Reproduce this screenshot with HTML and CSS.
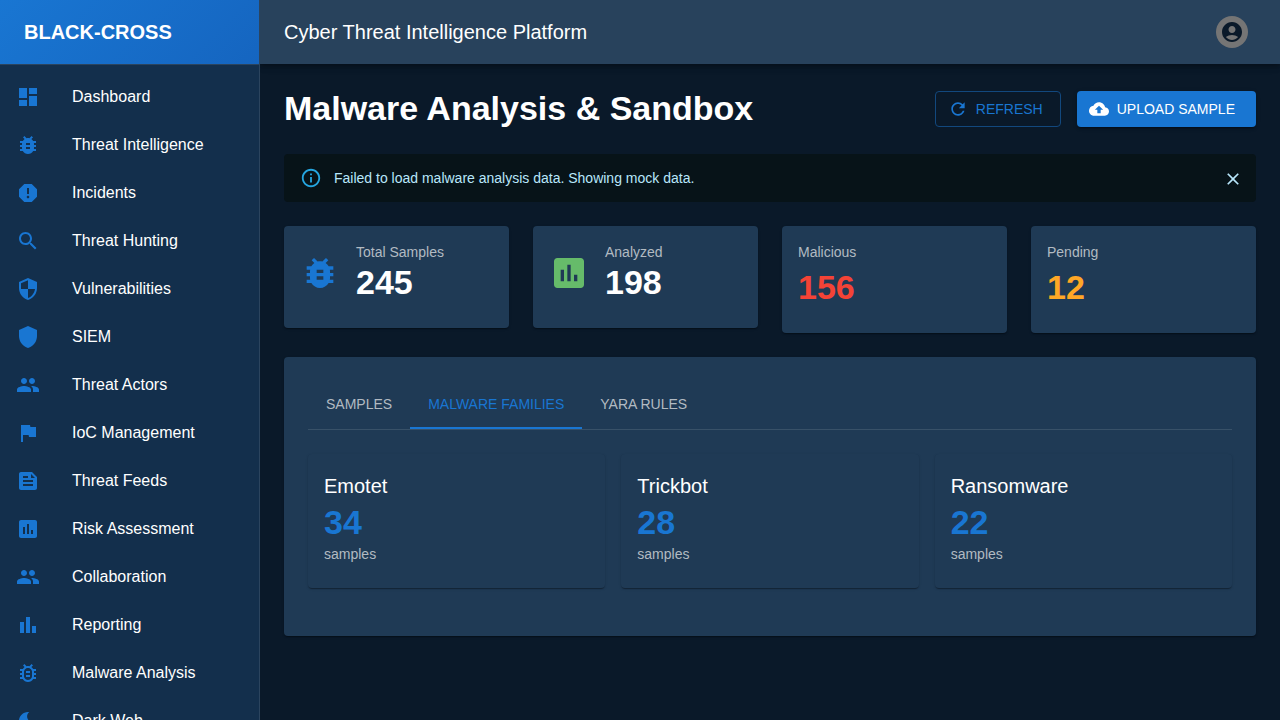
FILE: index.html
```html
<!DOCTYPE html>
<html lang="en">
<head>
<meta charset="utf-8">
<meta name="viewport" content="width=device-width, initial-scale=1">
<title>Malware Analysis - Black-Cross</title>
<link rel="stylesheet" href="styles.css">
</head>
<body>
<svg class="sprite" aria-hidden="true">
  <symbol id="dashboard" viewBox="0 0 24 24"><path d="M3 13h8V3H3v10zm0 8h8v-6H3v6zm10 0h8V11h-8v10zm0-18v6h8V3h-8z"/></symbol>
  <symbol id="bug" viewBox="0 0 24 24"><path d="M20 8h-2.81c-.45-.78-1.07-1.45-1.82-1.96L17 4.41 15.59 3l-2.17 2.17C12.96 5.06 12.49 5 12 5c-.49 0-.96.06-1.41.17L8.41 3 7 4.41l1.62 1.63C7.88 6.55 7.26 7.22 6.81 8H4v2h2.09c-.05.33-.09.66-.09 1v1H4v2h2v1c0 .34.04.67.09 1H4v2h2.81c1.04 1.79 2.97 3 5.19 3s4.15-1.21 5.19-3H20v-2h-2.09c.05-.33.09-.66.09-1v-1h2v-2h-2v-1c0-.34-.04-.67-.09-1H20V8zm-6 8h-4v-2h4v2zm0-4h-4v-2h4v2z"/></symbol>
  <symbol id="bug-outline" viewBox="0 0 24 24"><path d="M20 8h-2.81c-.45-.78-1.07-1.45-1.82-1.96L17 4.41 15.59 3l-2.17 2.17C12.96 5.06 12.49 5 12 5s-.96.06-1.41.17L8.41 3 7 4.41l1.62 1.63C7.88 6.55 7.26 7.22 6.81 8H4v2h2.09c-.05.33-.09.66-.09 1v1H4v2h2v1c0 .34.04.67.09 1H4v2h2.81c1.04 1.79 2.97 3 5.19 3s4.15-1.21 5.19-3H20v-2h-2.09c.05-.33.09-.66.09-1v-1h2v-2h-2v-1c0-.34-.04-.67-.09-1H20V8zm-4 4v3c0 .22-.03.47-.07.7l-.1.65-.37.65c-.72 1.24-2.04 2-3.46 2s-2.74-.77-3.46-2l-.37-.64-.1-.65C8.03 15.48 8 15.23 8 15v-4c0-.23.03-.48.07-.7l.1-.65.37-.65c.3-.52.72-.97 1.21-1.31l.57-.39.74-.18c.31-.08.63-.12.94-.12.32 0 .63.04.95.12l.68.16.61.42c.5.34.91.78 1.21 1.31l.38.65.1.65c.04.22.07.47.07.69v1zm-6 2h4v2h-4zm0-4h4v2h-4z"/></symbol>
  <symbol id="report" viewBox="0 0 24 24"><path d="M15.73 3H8.27L3 8.27v7.46L8.27 21h7.46L21 15.73V8.27L15.73 3zM12 17.3c-.72 0-1.3-.58-1.3-1.3s.58-1.3 1.3-1.3 1.3.58 1.3 1.3-.58 1.3-1.3 1.3zm1-4.3h-2V7h2v6z"/></symbol>
  <symbol id="search" viewBox="0 0 24 24"><path d="M15.5 14h-.79l-.28-.27C15.41 12.59 16 11.11 16 9.5 16 5.91 13.09 3 9.5 3S3 5.91 3 9.5 5.91 16 9.5 16c1.61 0 3.09-.59 4.23-1.57l.27.28v.79l5 4.99L20.49 19l-4.99-5zm-6 0C7.01 14 5 11.99 5 9.5S7.01 5 9.5 5 14 7.01 14 9.5 11.99 14 9.5 14z"/></symbol>
  <symbol id="security" viewBox="0 0 24 24"><path d="M12 1 3 5v6c0 5.55 3.84 10.74 9 12 5.16-1.26 9-6.45 9-12V5l-9-4zm0 10.99h7c-.53 4.12-3.28 7.79-7 8.94V12H5V6.3l7-3.11v8.8z"/></symbol>
  <symbol id="shield" viewBox="0 0 24 24"><path d="M12 1 3 5v6c0 5.55 3.84 10.74 9 12 5.16-1.26 9-6.45 9-12V5l-9-4z"/></symbol>
  <symbol id="people" viewBox="0 0 24 24"><path d="M16 11c1.66 0 2.99-1.34 2.99-3S17.66 5 16 5c-1.66 0-3 1.34-3 3s1.34 3 3 3zm-8 0c1.66 0 2.99-1.34 2.99-3S9.66 5 8 5C6.34 5 5 6.34 5 8s1.34 3 3 3zm0 2c-2.33 0-7 1.17-7 3.5V19h14v-2.5c0-2.33-4.67-3.5-7-3.5zm8 0c-.29 0-.62.02-.97.05 1.16.84 1.97 1.97 1.97 3.45V19h6v-2.5c0-2.33-4.67-3.5-7-3.5z"/></symbol>
  <symbol id="flag" viewBox="0 0 24 24"><path d="M14.4 6 14 4H5v17h2v-7h5.6l.4 2h7V6z"/></symbol>
  <symbol id="feed" viewBox="0 0 24 24"><path d="M16 3H5c-1.1 0-2 .9-2 2v14c0 1.1.9 2 2 2h14c1.1 0 2-.9 2-2V8l-5-5zM7 7h5v2H7V7zm10 10H7v-2h10v2zm0-4H7v-2h10v2zm-2-4V5l4 4h-4z"/></symbol>
  <symbol id="assessment" viewBox="0 0 24 24"><path d="M19 3H5c-1.1 0-2 .9-2 2v14c0 1.1.9 2 2 2h14c1.1 0 2-.9 2-2V5c0-1.1-.9-2-2-2zM9 17H7v-7h2v7zm4 0h-2V7h2v10zm4 0h-2v-4h2v4z"/></symbol>
  <symbol id="bars" viewBox="0 0 24 24"><path d="M4 9h4v11H4zm12 4h4v7h-4zm-6-9h4v16h-4z"/></symbol>
  <symbol id="moon" viewBox="0 0 24 24"><path d="M12 3c-4.97 0-9 4.03-9 9s4.03 9 9 9 9-4.03 9-9c0-.46-.04-.92-.1-1.36-.98 1.37-2.58 2.26-4.4 2.26-2.98 0-5.4-2.42-5.4-5.4 0-1.81.89-3.42 2.26-4.4-.44-.06-.9-.1-1.36-.1z"/></symbol>
  <symbol id="account" viewBox="0 0 24 24"><path d="M12 2C6.48 2 2 6.48 2 12s4.48 10 10 10 10-4.48 10-10S17.52 2 12 2zm0 4c1.93 0 3.5 1.57 3.5 3.5S13.93 13 12 13s-3.5-1.57-3.5-3.5S10.07 6 12 6zm0 14c-2.03 0-4.43-.82-6.14-2.88C7.55 15.8 9.68 15 12 15s4.45.8 6.14 2.12C16.43 19.18 14.03 20 12 20z"/></symbol>
  <symbol id="refresh" viewBox="0 0 24 24"><path d="M17.65 6.35C16.2 4.9 14.21 4 12 4c-4.42 0-7.99 3.58-7.99 8s3.57 8 7.99 8c3.73 0 6.84-2.55 7.73-6h-2.08c-.82 2.33-3.04 4-5.65 4-3.31 0-6-2.69-6-6s2.69-6 6-6c1.66 0 3.14.69 4.22 1.78L13 11h7V4l-2.35 2.35z"/></symbol>
  <symbol id="upload" viewBox="0 0 24 24"><path d="M19.35 10.04C18.67 6.59 15.64 4 12 4 9.11 4 6.6 5.64 5.35 8.04 2.34 8.36 0 10.91 0 14c0 3.31 2.69 6 6 6h13c2.76 0 5-2.24 5-5 0-2.64-2.05-4.78-4.65-4.96zM14 13v4h-4v-4H7l5-5 5 5h-3z"/></symbol>
  <symbol id="info" viewBox="0 0 24 24"><path d="M11 7h2v2h-2zm0 4h2v6h-2zm1-9C6.48 2 2 6.48 2 12s4.48 10 10 10 10-4.48 10-10S17.52 2 12 2zm0 18c-4.41 0-8-3.59-8-8s3.59-8 8-8 8 3.59 8 8-3.59 8-8 8z"/></symbol>
  <symbol id="close" viewBox="0 0 24 24"><path d="M19 6.41 17.59 5 12 10.59 6.41 5 5 6.41 10.59 12 5 17.59 6.41 19 12 13.41 17.59 19 19 17.59 13.41 12z"/></symbol>
</svg>
<div class="layout">
  <aside class="sidebar">
    <div class="brand">BLACK-CROSS</div>
    <nav class="nav" aria-label="Main">
      <a class="nav-link" href="#"><svg class="icon"><use href="#dashboard"/></svg><span>Dashboard</span></a>
      <a class="nav-link" href="#"><svg class="icon"><use href="#bug"/></svg><span>Threat Intelligence</span></a>
      <a class="nav-link" href="#"><svg class="icon"><use href="#report"/></svg><span>Incidents</span></a>
      <a class="nav-link" href="#"><svg class="icon"><use href="#search"/></svg><span>Threat Hunting</span></a>
      <a class="nav-link" href="#"><svg class="icon"><use href="#security"/></svg><span>Vulnerabilities</span></a>
      <a class="nav-link" href="#"><svg class="icon"><use href="#shield"/></svg><span>SIEM</span></a>
      <a class="nav-link" href="#"><svg class="icon"><use href="#people"/></svg><span>Threat Actors</span></a>
      <a class="nav-link" href="#"><svg class="icon"><use href="#flag"/></svg><span>IoC Management</span></a>
      <a class="nav-link" href="#"><svg class="icon"><use href="#feed"/></svg><span>Threat Feeds</span></a>
      <a class="nav-link" href="#"><svg class="icon"><use href="#assessment"/></svg><span>Risk Assessment</span></a>
      <a class="nav-link" href="#"><svg class="icon"><use href="#people"/></svg><span>Collaboration</span></a>
      <a class="nav-link" href="#"><svg class="icon"><use href="#bars"/></svg><span>Reporting</span></a>
      <a class="nav-link" href="#"><svg class="icon"><use href="#bug-outline"/></svg><span>Malware Analysis</span></a>
      <a class="nav-link" href="#"><svg class="icon"><use href="#moon"/></svg><span>Dark Web</span></a>
    </nav>
  </aside>
  <div class="page">
    <header class="appbar">
      <div class="appbar-title">Cyber Threat Intelligence Platform</div>
      <button class="avatar" type="button" aria-label="Account"><svg class="icon"><use href="#account"/></svg></button>
    </header>
    <main class="content">
      <div class="heading">
        <h1 class="title">Malware Analysis &amp; Sandbox</h1>
        <div class="actions">
          <button class="btn btn-outlined" type="button"><svg class="icon"><use href="#refresh"/></svg>REFRESH</button>
          <button class="btn btn-filled" type="button"><svg class="icon"><use href="#upload"/></svg>UPLOAD SAMPLE</button>
        </div>
      </div>
      <div class="alert" role="alert">
        <svg class="icon alert-icon"><use href="#info"/></svg>
        <span class="alert-text">Failed to load malware analysis data. Showing mock data.</span>
        <button class="alert-close" type="button" aria-label="Close"><svg class="icon"><use href="#close"/></svg></button>
      </div>
      <section class="stats" aria-label="Statistics">
        <div class="card stat">
          <svg class="icon stat-icon stat-icon-blue"><use href="#bug"/></svg>
          <div><div class="label">Total Samples</div><div class="value">245</div></div>
        </div>
        <div class="card stat">
          <svg class="icon stat-icon stat-icon-green"><use href="#assessment"/></svg>
          <div><div class="label">Analyzed</div><div class="value">198</div></div>
        </div>
        <div class="card"><div class="label label-spaced">Malicious</div><div class="value value-red">156</div></div>
        <div class="card"><div class="label label-spaced">Pending</div><div class="value value-orange">12</div></div>
      </section>
      <section class="panel">
        <div class="tabs" role="tablist">
          <button class="tab" type="button" role="tab" aria-selected="false">SAMPLES</button>
          <button class="tab tab-active" type="button" role="tab" aria-selected="true">MALWARE FAMILIES</button>
          <button class="tab" type="button" role="tab" aria-selected="false">YARA RULES</button>
        </div>
        <div class="families" role="tabpanel">
          <article class="card"><h2 class="family">Emotet</h2><div class="value value-blue">34</div><div class="label">samples</div></article>
          <article class="card"><h2 class="family">Trickbot</h2><div class="value value-blue">28</div><div class="label">samples</div></article>
          <article class="card"><h2 class="family">Ransomware</h2><div class="value value-blue">22</div><div class="label">samples</div></article>
        </div>
      </section>
    </main>
  </div>
</div>
</body>
</html>
```

FILE: styles.css
```css
:root {
  --blue: #1976d2;
  --bg: #0a1929;
  --side: #132f4c;
  --surface: #1f3a55;
  --muted: #b2bac2;
  --shadow: 0 2px 1px -1px rgba(0, 0, 0, .2), 0 1px 1px 0 rgba(0, 0, 0, .14), 0 1px 3px 0 rgba(0, 0, 0, .12);
}

* { box-sizing: border-box; }

body {
  margin: 0;
  background: var(--bg);
  color: #fff;
  font-family: "Liberation Sans", Arial, sans-serif;
  font-size: 16px;
  line-height: 24px;
}

button {
  margin: 0;
  border: 0;
  background: none;
  color: inherit;
  font: inherit;
  cursor: pointer;
}

.sprite { display: none; }

.icon {
  display: block;
  flex: none;
  width: 24px;
  height: 24px;
  fill: currentColor;
}

.layout {
  display: flex;
  height: 100vh;
}

/* Sidebar */
.sidebar {
  position: relative;
  z-index: 1;
  flex: none;
  width: 260px;
  overflow-y: auto;
  scrollbar-width: none;
  background: var(--side);
  border-right: 1px solid #2b445e;
}

.brand {
  display: flex;
  align-items: center;
  height: 65px;
  padding: 0 24px;
  border-bottom: 1px solid #2b445e;
  background: linear-gradient(135deg, #1976d2 0%, #1565c0 100%);
  font-size: 20px;
  font-weight: 700;
}

.nav { padding: 8px 0; }

.nav-link {
  display: flex;
  align-items: center;
  gap: 32px;
  height: 48px;
  padding: 0 16px;
  color: #fff;
  text-decoration: none;
}

.nav-link .icon { color: var(--blue); }

/* Top bar */
.page {
  display: flex;
  flex: 1;
  flex-direction: column;
  min-width: 0;
}

.appbar {
  display: flex;
  flex: none;
  align-items: center;
  justify-content: space-between;
  height: 64px;
  padding: 0 32px 0 24px;
  background: #28425c;
  box-shadow: 0 2px 4px -1px rgba(0, 0, 0, .2), 0 4px 5px 0 rgba(0, 0, 0, .14), 0 1px 10px 0 rgba(0, 0, 0, .12);
}

.appbar-title { font-size: 20px; }

.avatar {
  display: flex;
  align-items: center;
  justify-content: center;
  width: 32px;
  height: 32px;
  padding: 0;
  border-radius: 50%;
  background: #757575;
  color: var(--bg);
}

/* Content */
.content {
  flex: 1;
  padding: 24px;
  overflow-y: auto;
}

.heading {
  display: flex;
  align-items: center;
  justify-content: space-between;
  margin-bottom: 24px;
}

.title {
  margin: 0;
  padding-bottom: 2px;
  font-size: 34px;
  line-height: 40px;
}

.actions {
  display: flex;
  gap: 16px;
}

.btn {
  display: flex;
  align-items: center;
  gap: 8px;
  height: 36px;
  padding: 0 21px 0 12px;
  border-radius: 4px;
  font-size: 14px;
}

.btn .icon {
  width: 20px;
  height: 20px;
}

.btn-outlined {
  padding-right: 17px;
  border: 1px solid #12487e;
  color: var(--blue);
}

.btn-filled {
  background: var(--blue);
  box-shadow: 0 3px 1px -2px rgba(0, 0, 0, .2), 0 2px 2px 0 rgba(0, 0, 0, .14), 0 1px 5px 0 rgba(0, 0, 0, .12);
}

.alert {
  display: flex;
  align-items: center;
  gap: 12px;
  height: 48px;
  margin-bottom: 24px;
  padding: 0 8px 0 16px;
  border-radius: 4px;
  background: #071318;
  color: #b8e7fb;
  font-size: 14px;
}

.alert-icon {
  width: 22px;
  height: 22px;
  color: #29b6f6;
  opacity: .9;
}

.alert-text { flex: 1; }

.alert-close { padding: 6px 5px 4px; }

.alert-close .icon {
  width: 20px;
  height: 20px;
}

.card {
  padding: 16px 16px 24px;
  border-radius: 4px;
  background: var(--surface);
  box-shadow: var(--shadow);
}

.stats {
  display: grid;
  grid-template-columns: repeat(4, 1fr);
  align-items: start;
  gap: 24px;
  margin-bottom: 24px;
}

.stat {
  display: flex;
  align-items: center;
  gap: 16px;
}

.stat-icon {
  width: 40px;
  height: 40px;
}

.stat-icon-blue { color: var(--blue); }
.stat-icon-green { color: #66bb6a; }

.label {
  color: var(--muted);
  font-size: 14px;
  line-height: 20px;
}

.label-spaced { margin-bottom: 5px; }

.value {
  padding-bottom: 2px;
  font-size: 34px;
  font-weight: 700;
  line-height: 40px;
}

.value-red { color: #f44336; }
.value-orange { color: #ffa726; }
.value-blue { color: var(--blue); }

.panel {
  padding: 24px;
  border-radius: 4px;
  background: var(--surface);
  box-shadow: var(--shadow);
}

.tabs {
  display: flex;
  border-bottom: 1px solid #385168;
}

.tab {
  height: 48px;
  padding: 0 18px;
  border-bottom: 2px solid transparent;
  color: var(--muted);
  font-size: 14px;
}

.tab-active {
  border-bottom-color: var(--blue);
  color: var(--blue);
}

.families {
  display: grid;
  grid-template-columns: repeat(3, 1fr);
  gap: 16px;
  padding: 24px 0;
}

.family {
  margin: 0;
  font-size: 20px;
  font-weight: 400;
  line-height: 32px;
}
```
